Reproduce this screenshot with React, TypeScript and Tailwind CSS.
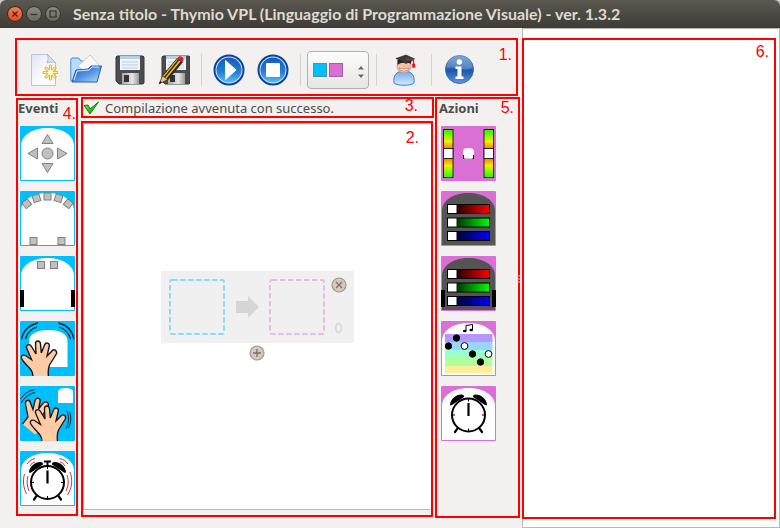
import React from "react";

type DrawingProps = { children: React.ReactNode };

/* ---------- shared pieces ---------- */

function Mark({ children, className }: { children: string; className: string }) {
  return (
    <span
      className={`pointer-events-none absolute z-10 font-['Liberation_Sans',sans-serif] text-[16px] leading-4 font-normal text-[#ff0000] ${className}`}
    >
      {children}
    </span>
  );
}

function Tile({ label, children }: { label: string; children: React.ReactNode }) {
  return (
    <button type="button" aria-label={label} className="block size-[55px] overflow-hidden rounded-[1px]">
      <svg viewBox="0 0 55 55" className="block size-full">
        {children}
      </svg>
    </button>
  );
}

function ToolButton({ label, children }: { label: string; children: React.ReactNode }) {
  return (
    <button type="button" aria-label={label} className="flex h-10 w-11 shrink-0 items-center justify-center">
      <svg viewBox="0 0 32 32" className="block size-8">
        {children}
      </svg>
    </button>
  );
}

function Separator() {
  return <span className="mx-[5px] h-8 w-px shrink-0 bg-[#d6d4d2]" />;
}

const bodyPath = "M1 54V20C1 9 13 2 27.5 2S54 9 54 20V54Z";
const handPath =
  "M13 56C13 50 10.500 48 8 45.500C5 42 1.500 39 1.300 36.500C1.300 33.500 5 33.500 7 35.500L11.500 38.500L7 28C5 24 9.500 22 11.500 25.500L16 33L15.500 23C15.500 19 20 19 20.500 23L21.300 32L24.500 24C26 20.500 30 22 29.200 25.500L27 35L31.500 30.500C34 27 38 30 36 33.500L29.500 44C28 47 28 51 28.500 56Z";

/* ---------- title bar ---------- */

function TitleBar() {
  return (
    <header className="flex h-7 items-center gap-3 rounded-t-md bg-linear-to-b from-[#5b5850] to-[#3d3c37] pl-[7px]">
      <div className="flex gap-[3px]">
        <button type="button" aria-label="Chiudi" className="size-4 rounded-full border border-[#3a2a22] bg-linear-to-b from-[#f47c55] to-[#df4b1c]">
          <svg viewBox="0 0 14 14" className="block size-full">
            <path d="M4.500 4.500l5 5M9.500 4.500l-5 5" stroke="#51200f" strokeWidth="1.400" />
          </svg>
        </button>
        <button type="button" aria-label="Riduci" className="size-4 rounded-full border border-[#35342f] bg-linear-to-b from-[#8c8a80] to-[#6a6860]">
          <svg viewBox="0 0 14 14" className="block size-full">
            <path d="M3.500 7.500h7" stroke="#3a3934" strokeWidth="1.400" />
          </svg>
        </button>
        <button type="button" aria-label="Ingrandisci" className="size-4 rounded-full border border-[#35342f] bg-linear-to-b from-[#8c8a80] to-[#6a6860]">
          <svg viewBox="0 0 14 14" className="block size-full">
            <rect x="4" y="4" width="6" height="6" fill="none" stroke="#3a3934" strokeWidth="1.300" />
          </svg>
        </button>
      </div>
      <h1 className="truncate font-['Lato','Noto_Sans',sans-serif] text-[16px] leading-7 font-bold text-[#dfdbd2]">
        Senza titolo - Thymio VPL (Linguaggio di Programmazione Visuale) - ver. 1.3.2
      </h1>
    </header>
  );
}

/* ---------- toolbar ---------- */

function Floppy() {
  return (
    <>
      <path d="M3 2h26l1 1v26l-1 1H5l-3-3V3z" fill="#4c4c4e" stroke="#39393b" />
      <rect x="6" y="2" width="20" height="14" fill="#eef5fc" />
      <rect x="6" y="2" width="20" height="3" fill="#b9cfe4" />
      <path d="M8 8h16M8 11h16M8 14h16" stroke="#b8cde2" />
      <rect x="8" y="19" width="17" height="11" fill="url(#metal)" />
      <rect x="10" y="21" width="5" height="7" fill="#333336" />
    </>
  );
}

function Orb() {
  return (
    <>
      <circle cx="16" cy="16" r="15.500" fill="#0c419e" />
      <circle cx="16" cy="16" r="13.500" fill="#c5e6fb" />
      <circle cx="16" cy="16" r="12.500" fill="url(#orb)" />
    </>
  );
}

function Toolbar() {
  return (
    <div role="toolbar" aria-label="Strumenti" className="relative mr-1 flex h-[58px] items-center border-2 border-[#ff0000] pt-[6px] pl-[3px]">
      <ToolButton label="Nuovo">
        <path d="M5.500 .5h16l8 8v23h-24z" fill="url(#paper)" stroke="#bcc1dc" />
        <path d="M21.500 .5c1 3 .5 6-.5 8.500 3-1 6-1 8.500-.5z" fill="#d9dcf3" stroke="#a7add3" strokeWidth=".8" />
        <g stroke="#e8a11b" strokeWidth="3" strokeLinecap="round">
          <path d="M24.500 12v13M18 18.500h13M20 14l9 9M29 14l-9 9" />
        </g>
        <g stroke="#fff09a" strokeWidth="1.400" strokeLinecap="round">
          <path d="M24.500 12v13M18 18.500h13M20 14l9 9M29 14l-9 9" />
        </g>
        <circle cx="24.500" cy="18.500" r="2.400" fill="#fffbe0" />
      </ToolButton>
      <ToolButton label="Apri">
        <path d="M.8 27V5l1-1h7l2 3h13v20z" fill="#b4dcfb" stroke="#4f8fd6" />
        <path d="M8 12L20 1l9 10-8 12z" fill="#f8f8fa" stroke="#bfc3cc" strokeWidth=".8" />
        <path d="M2 28l4-12 12-1 3-3h10.500L27 28z" fill="url(#folder)" stroke="#2c59b8" />
        <path d="M4 26l3-9 12-1 3-3h7" fill="none" stroke="#d7ecff" />
      </ToolButton>
      <ToolButton label="Salva">
        <Floppy />
      </ToolButton>
      <ToolButton label="Salva con nome">
        <g transform="translate(2 0)">
          <Floppy />
        </g>
        <path d="M1 30l3-8L19 4l6 4L10 26z" fill="#2a2414" />
        <path d="M5 22L19 5l3.500 2.500L8 25z" fill="#f4b72f" />
        <path d="M6.500 23.500L20.500 6" stroke="#403108" strokeWidth="1.600" />
        <path d="M1 30l3.500-8 5 3.500z" fill="#e7c58d" stroke="#51401e" strokeWidth=".6" />
        <path d="M1 30l1.300-3 1.700 1.200z" fill="#111" />
        <path d="M19 5l2-2.500c1.500-1 5.500 1.500 4.500 3.500L24 8.500z" fill="#d61f2c" />
      </ToolButton>
      <Separator />
      <ToolButton label="Avvia">
        <Orb />
        <path d="M12.500 6.500L23 16 12.500 25.500z" fill="#fff" stroke="#fff" strokeLinejoin="round" />
      </ToolButton>
      <ToolButton label="Ferma">
        <Orb />
        <rect x="9" y="9" width="14" height="14" rx="1" fill="#fff" />
      </ToolButton>
      <Separator />
      <div className="relative mr-[2px] ml-px h-[38px] w-[62px] shrink-0">
        <select
          aria-label="Schema di colori"
          className="size-full appearance-none rounded-[4px] border border-[#b3b0ac] bg-linear-to-b from-[#fdfdfd] to-[#e6e5e3]"
        >
          <option value="cyan-orchid" aria-label="Azzurro e rosa" />
        </select>
        <span className="pointer-events-none absolute inset-0 flex items-center gap-[2px] pl-[6px]">
          <span className="size-[14px] border border-[#4a92b0] bg-[#00bfff]" />
          <span className="size-[14px] border border-[#a066a0] bg-[#da70d6]" />
          <svg viewBox="0 0 6 12" className="ml-[13px] h-3 w-[6px] translate-y-[2px]">
            <path d="M0 3.500L3 0l3 3.500zM0 8.500L3 12l3-3.500z" fill="#6b6965" />
          </svg>
        </span>
      </div>
      <Separator />
      <ToolButton label="Modalità avanzata">
        <path d="M6 29c-1-7 2-12 10-12s11 5 10 12c-3 3-17 3-20 0z" fill="url(#shirt)" stroke="#3d78d8" />
        <circle cx="16" cy="12" r="7" fill="#f6c0a4" stroke="#c98872" strokeWidth=".7" />
        <path d="M11 14c3 1.500 7 1.500 10 0-1 4-9 4-10 0z" fill="#fff" stroke="#a4604c" strokeWidth=".6" />
        <path d="M9.500 11V6h14l-.5 4c-4-2-9-2-13.500 1z" fill="#252525" />
        <path d="M8 4.500L18 1l8.500 4L18 9.500z" fill="#3b3b3b" stroke="#191919" strokeWidth=".6" />
        <path d="M18 5l7.500 1v6" fill="none" stroke="#cf1f28" strokeWidth="1.300" />
        <path d="M24 10l3-.5.500 4-3 .5z" fill="#cf1f28" />
      </ToolButton>
      <Separator />
      <ToolButton label="Informazioni">
        <circle cx="16.500" cy="15.500" r="14" fill="url(#info)" stroke="#3b69ad" />
        <path d="M3.500 14a13 13 0 0 1 26 0c-8 4-18-2-26 0z" fill="#fff" opacity=".22" />
        <circle cx="16.300" cy="8" r="2.700" fill="#fff" />
        <path d="M12.500 12.500h6v10h2v2.500h-8v-2.500h2V15h-2z" fill="#fff" />
      </ToolButton>
      <Mark className="top-[7px] right-1">1.</Mark>
    </div>
  );
}

/* Gradients used by the drawings */
function Gradients() {
  return (
    <svg className="absolute size-0" aria-hidden="true">
      <defs>
        <linearGradient id="paper" x1="0" y1="0" x2="1" y2="1">
          <stop offset="0" stopColor="#dfe3f8" />
          <stop offset=".6" stopColor="#fdfdff" />
        </linearGradient>
        <linearGradient id="folder" x1="0" y1="0" x2="1" y2="1">
          <stop offset="0" stopColor="#2456b8" />
          <stop offset=".5" stopColor="#4f93e2" />
          <stop offset="1" stopColor="#b9dcfb" />
        </linearGradient>
        <linearGradient id="metal" x1="0" y1="0" x2="1" y2="0">
          <stop offset="0" stopColor="#a8a8a8" />
          <stop offset=".6" stopColor="#e6e6e6" />
          <stop offset="1" stopColor="#9a9a9a" />
        </linearGradient>
        <linearGradient id="orb" x1="0" y1="0" x2="0" y2="1">
          <stop offset="0" stopColor="#1659bd" />
          <stop offset=".6" stopColor="#2580d6" />
          <stop offset="1" stopColor="#56c0f6" />
        </linearGradient>
        <linearGradient id="info" x1="0" y1="0" x2="0" y2="1">
          <stop offset="0" stopColor="#5b8ed2" />
          <stop offset=".55" stopColor="#1d57a8" />
          <stop offset="1" stopColor="#5f98dc" />
        </linearGradient>
        <linearGradient id="shirt" x1="0" y1="0" x2="0" y2="1">
          <stop offset="0" stopColor="#6fa8f0" />
          <stop offset="1" stopColor="#d7ebff" />
        </linearGradient>
        <linearGradient id="speed" x1="0" y1="0" x2="0" y2="1">
          <stop offset="0" stopColor="#1bff00" />
          <stop offset=".25" stopColor="#f0f000" />
          <stop offset=".4" stopColor="#ff7a00" />
          <stop offset=".6" stopColor="#ff7a00" />
          <stop offset=".75" stopColor="#f0f000" />
          <stop offset="1" stopColor="#1bff00" />
        </linearGradient>
        <linearGradient id="red">
          <stop offset=".2" stopColor="#200000" />
          <stop offset="1" stopColor="#ff0000" />
        </linearGradient>
        <linearGradient id="green">
          <stop offset=".2" stopColor="#003000" />
          <stop offset="1" stopColor="#00ff00" />
        </linearGradient>
        <linearGradient id="blue">
          <stop offset=".2" stopColor="#000030" />
          <stop offset="1" stopColor="#0000ff" />
        </linearGradient>
        <linearGradient id="tick" x1="0" y1="0" x2="1" y2="1">
          <stop offset="0" stopColor="#5aff3c" />
          <stop offset="1" stopColor="#009a00" />
        </linearGradient>
      </defs>
    </svg>
  );
}

/* ---------- event and action drawings ---------- */

function CyanTile({ children }: DrawingProps) {
  return (
    <>
      <rect width="55" height="55" fill="#00bfff" />
      <path d={bodyPath} fill="#fff" />
      {children}
    </>
  );
}

function Sensor({ x, y, turn = 0 }: { x: number; y: number; turn?: number }) {
  return (
    <rect
      x={x - 3.5}
      y={y - 3.5}
      width="7"
      height="7"
      fill="#c0c0c0"
      stroke="#808080"
      transform={`rotate(${turn} ${x} ${y})`}
    />
  );
}

function Clock({ cy }: { cy: number }) {
  return (
    <g transform={`translate(27.5 ${cy})`}>
      <path d="M-11 13.500L-13.500 17M11 13.500L13.500 17" stroke="#000" strokeWidth="2.200" strokeLinecap="round" />
      <circle r="16.500" fill="#fff" stroke="#000" strokeWidth="2" />
      <path d="M-18.500 -10.500C-18 -16 -12 -21 -6.500 -20.500C-5 -20 -4 -19 -4.500 -18L-16.500 -10C-17.500 -9.500 -18.500 -9.500 -18.500 -10.500Z" />
      <path d="M18.500 -10.500C18 -16 12 -21 6.500 -20.500C5 -20 4 -19 4.500 -18L16.500 -10C17.500 -9.500 18.500 -9.500 18.500 -10.500Z" />
      <path d="M0 -12V1" stroke="#000" strokeWidth="2.200" />
      <path d="M0 -16v2.500M0 16v-2.500M-16 0h2.500M16 0h-2.500" stroke="#000" />
    </g>
  );
}

function LightTile({ wheels = false }: { wheels?: boolean }) {
  const bars = [
    { y: 13.5, fill: "url(#red)" },
    { y: 27, fill: "url(#green)" },
    { y: 40.5, fill: "url(#blue)" },
  ];
  return (
    <>
      <rect width="55" height="55" fill="#da70d6" />
      <path d={bodyPath} fill="#545454" />
      {wheels && <path d="M0 34h4v17H0zM51 34h4v17h-4z" fill="#000" />}
      {bars.map((bar) => (
        <g key={bar.fill}>
          <rect x="6.500" y={bar.y} width="42" height="9" fill={bar.fill} stroke="#000" />
          <rect x="7" y={bar.y + 0.5} width="8.500" height="8" fill="#fff" />
        </g>
      ))}
    </>
  );
}

function EventTiles() {
  return (
    <>
      <Tile label="Pulsanti">
        <CyanTile>
          <g fill="#c0c0c0" stroke="#808080">
            <path d="M27.500 8.500L33 17.500H22zM27.500 46.500L33 37.500H22zM8 27.500L17.500 22v11zM47 27.500L37.500 22v11z" />
            <circle cx="27.500" cy="27.500" r="5.500" />
          </g>
        </CyanTile>
      </Tile>
      <Tile label="Sensori orizzontali">
        <CyanTile>
          <Sensor x={6.7} y={12.7} turn={-38} />
          <Sensor x={16.5} y={7.3} turn={-18} />
          <Sensor x={27.5} y={5.5} />
          <Sensor x={38.5} y={7.3} turn={18} />
          <Sensor x={48.3} y={12.7} turn={38} />
          <Sensor x={13.5} y={50} />
          <Sensor x={41.5} y={50} />
        </CyanTile>
      </Tile>
      <Tile label="Sensori del suolo">
        <CyanTile>
          <Sensor x={21} y={9} />
          <Sensor x={34} y={9} />
          <path d="M0 34h4v17H0zM51 34h4v17h-4z" />
        </CyanTile>
      </Tile>
      <Tile label="Tocco">
        <rect width="55" height="55" fill="#00bfff" />
        <path d="M9 46V20C9 12 19 9 28.500 9S47.500 12 47.500 20V46Z" fill="#fff" />
        <g fill="none" stroke="#102030" strokeWidth="1.300">
          <path d="M1.500 18.500C3 10 9 4 18 2M5.500 18C7 12 11 8 17 6M54 18.500C52.500 10 47 4 38.500 2M50.500 18C49 12 45 8 39 6" />
        </g>
        <path d={handPath} fill="#ffcba4" stroke="#151515" strokeWidth="1.400" />
      </Tile>
      <Tile label="Battito di mani">
        <rect width="55" height="55" fill="#00bfff" />
        <path d="M38 17V6C38 3 42 2 45.500 2S53 3 53 6V17Z" fill="#fff" />
        <g fill="none" stroke="#102030" strokeWidth="1">
          <path d="M.5 13C4 8 8 5 14.500 3.500M1 17C5 11 9 8 15 6.500M46.500 24.500C49.500 30 49 36 46 42.500M49.500 26C51.500 31 51 37 48.500 42" />
        </g>
        <path
          d="M2.500 38L8 31 5.500 18C5 13.500 9.500 13 10.500 17L13 23.500 15 14.500C16.500 10.500 21 12 20 16L18.500 23 22.500 18C25.500 13.500 30 17 27.500 21L22 30 26 40 15 48.500Z"
          fill="#ffcba4"
        />
        <path
          d="M2.500 38L8 31 5.500 18C5 13.500 9.500 13 10.500 17L13 23.500 15 14.500C16.500 10.500 21 12 20 16L18.500 23 22.500 18C25.500 13.500 30 17 27.500 21L22 30"
          fill="none"
          stroke="#151515"
          strokeWidth="1.300"
        />
        <g transform="translate(9 0)">
          <path d={handPath} fill="#ffcba4" stroke="#151515" strokeWidth="1.300" />
        </g>
      </Tile>
      <Tile label="Timer scaduto">
        <CyanTile>
          <path d="M27.500 10v5M24 10.500h7" stroke="#000" strokeWidth="2" />
          <Clock cy={31.5} />
          <path
            d="M7 13C9 10 11 8.500 15 7.500M10 15C11 13 13 11.500 15 11M48 13C46 10 44 8.500 39.500 7.500M45 15C44 13 42 11.500 40 11M4.500 23C2.500 30 3.500 37 6.500 43M8 25C6.500 30 7 35 9 40M50 21C53 29 52 37 47.500 44M47 24C49 30 48.500 35 46 40"
            fill="none"
            stroke="#b3202a"
            strokeWidth=".9"
          />
        </CyanTile>
      </Tile>
    </>
  );
}

function ActionTiles() {
  return (
    <>
      <Tile label="Motori">
        <rect width="55" height="55" fill="#da70d6" />
        {[2.5, 43].map((x) => (
          <g key={x}>
            <rect x={x} y="3.500" width="9.500" height="48" fill="url(#speed)" stroke="#222" />
            <rect x={x} y="22.500" width="9.500" height="10" fill="#fff" stroke="#222" />
          </g>
        ))}
        <path d="M22 29h2v4h-2zM31 29h2v4h-2z" />
        <path d="M22 29V25.500C22 23 24 22 27.500 22S33 23 33 25.500V29H32V32.500H23V29Z" fill="#fff" />
      </Tile>
      <Tile label="Luci superiori">
        <LightTile />
      </Tile>
      <Tile label="Luci inferiori">
        <LightTile wheels />
      </Tile>
      <Tile label="Musica">
        <rect width="55" height="55" fill="#da70d6" />
        <path d={bodyPath} fill="#fff" />
        <path d="M4 13h47.500v8H4z" fill="#b399ff" />
        <path d="M4 21h47.500v8H4z" fill="#99d6ff" />
        <path d="M4 29h47.500v8H4z" fill="#99ffcc" />
        <path d="M4 37h47.500v8H4z" fill="#b3ff99" />
        <path d="M4 45h47.500v7.500H4z" fill="#ffee99" />
        <path d="M25 10V4.500L31.500 3.500V9" fill="none" stroke="#000" />
        <ellipse cx="23.700" cy="10" rx="1.800" ry="1.300" />
        <ellipse cx="30.200" cy="9" rx="1.800" ry="1.300" />
        <g stroke="#000">
          <circle cx="15.500" cy="17" r="3.200" />
          <circle cx="7.500" cy="25" r="3.200" />
          <circle cx="23.500" cy="25" r="3.400" fill="#fff" />
          <circle cx="31.500" cy="33" r="3.200" />
          <circle cx="47.500" cy="33" r="3.400" fill="#fff" />
          <circle cx="39.500" cy="41" r="3.200" />
        </g>
      </Tile>
      <Tile label="Timer">
        <rect width="55" height="55" fill="#da70d6" />
        <path d={bodyPath} fill="#fff" />
        <Clock cy={29} />
      </Tile>
    </>
  );
}

/* ---------- program area ---------- */

function Slot({ label, colour }: { label: string; colour: string }) {
  return (
    <button type="button" aria-label={label} className="size-14 shrink-0">
      <svg viewBox="0 0 56 56" className="block size-full">
        <rect x="1" y="1" width="54" height="54" rx="2" fill="none" stroke={colour} strokeWidth="2" strokeDasharray="5.500 2.500" />
      </svg>
    </button>
  );
}

function RoundButton({ label, d }: { label: string; d: string }) {
  return (
    <button type="button" aria-label={label} className="block size-4 shrink-0">
      <svg viewBox="0 0 16 16" className="block size-full">
        <circle cx="8" cy="8" r="7" fill="#d3c9bd" stroke="#a3978a" strokeWidth="1.200" />
        <path d={d} stroke="#7b7064" strokeWidth="1.300" />
      </svg>
    </button>
  );
}

function ProgramArea() {
  return (
    <section aria-label="Programma" className="relative mr-px mb-px flex flex-1 flex-col border-2 border-[#ff0000] pb-[5px]">
      <div className="flex flex-1 flex-col items-center justify-center gap-[2px] border border-[#bbb7b3] border-r-white bg-white pb-[2px]">
        <div className="flex h-[72px] items-center rounded-[1px] bg-[#f0f0f0] pr-[7px] pl-2">
          <Slot label="Evento" colour="#8cdcf8" />
          <svg viewBox="0 0 24 22" className="mr-[9px] ml-[11px] h-[22px] w-6">
            <path d="M0 5h12V0l11 11-11 11v-5H0z" fill="#d5d5d5" />
          </svg>
          <Slot label="Azione" colour="#e8bce6" />
          <div className="ml-[6px] flex h-[59px] flex-col items-center justify-between">
            <RoundButton label="Rimuovi" d="M5 5l6 6M11 5l-6 6" />
            <span className="text-[14px] leading-4 text-[#d2d2d2]">0</span>
          </div>
        </div>
        <RoundButton label="Aggiungi" d="M8 4v8M4 8h8" />
      </div>
      <Mark className="top-[7px] right-3">2.</Mark>
    </section>
  );
}

export default function App() {
  return (
    <div className="flex min-h-screen flex-col bg-[#c9c7d0] font-['Noto_Sans','Open_Sans',sans-serif] text-[#4c4c4c]">
      <Gradients />
      <TitleBar />
      <div className="grid flex-1 grid-cols-[522fr_258fr] bg-[#f2f1f0]">
        <div className="flex min-w-0 flex-col pt-[10px] pb-[10px] pl-[15px]">
          <Toolbar />
          <div className="mt-px mr-[2px] flex flex-1">
            <section className="relative mt-px mr-[3px] mb-[2px] ml-px flex w-[62px] shrink-0 flex-col border-2 border-[#ff0000]">
              <h2 className="h-[26px] text-[13px] leading-4 font-bold">Eventi</h2>
              <div className="flex flex-col gap-[10px] pb-2 pl-[2px]">
                <EventTiles />
              </div>
              <Mark className="top-[6px] right-0">4.</Mark>
            </section>
            <main className="mr-px flex min-w-0 flex-1 flex-col gap-[3px]">
              <div role="status" className="relative flex h-[21px] items-center gap-[5px] border-2 border-[#ff0000] text-[13px] leading-4">
                <svg viewBox="0 0 17 14" className="h-[14px] w-[17px] shrink-0">
                  <path d="M1 4.500L5 4l2 4L15.500 1 7 13z" fill="url(#tick)" stroke="#087808" strokeWidth=".9" />
                </svg>
                <span className="whitespace-nowrap">Compilazione avvenuta con successo.</span>
                <Mark className="-top-px right-[14px]">3.</Mark>
              </div>
              <ProgramArea />
            </main>
            <section className="relative flex w-[85px] shrink-0 flex-col border-2 border-[#ff0000]">
              <h2 className="h-[27px] pl-[2px] text-[13px] leading-[18px] font-bold">Azioni</h2>
              <div className="flex flex-col gap-[10px] pl-1">
                <ActionTiles />
              </div>
              <Mark className="top-px right-1">5.</Mark>
              <svg viewBox="0 0 4 8" className="absolute top-[176px] -right-[3px] h-2 w-1">
                <path d="M0 1h4M0 4h4M0 7h4" stroke="#c9c6c3" />
              </svg>
            </section>
          </div>
        </div>
        <aside className="flex flex-col border border-[#bbb8b4] bg-white pt-[9px] pr-[3px] pb-2">
          <div className="relative -ml-px flex-1 border-2 border-[#ff0000]">
            <Mark className="top-1 right-[5px]">6.</Mark>
          </div>
        </aside>
      </div>
    </div>
  );
}
